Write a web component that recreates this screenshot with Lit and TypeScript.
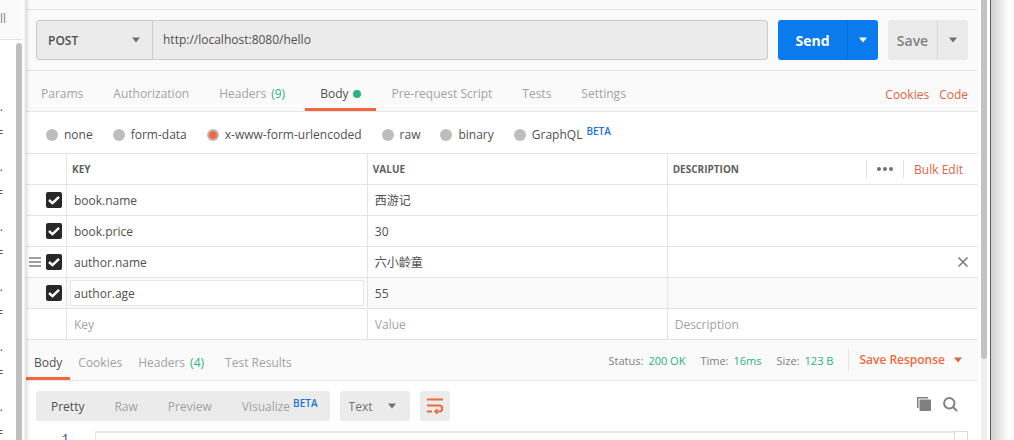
import { LitElement, html, css, nothing } from "lit";
import { customElement, property, state } from "lit/decorators.js";
import { classMap } from "lit/directives/class-map.js";

interface Row {
  key: string;
  value: string;
  hovered?: boolean;
  focused?: boolean;
}

const caret = () => html`<svg class="caret" width="8" height="6" viewBox="0 0 8 6" aria-hidden="true">
  <path d="M0 0.5H8L4 5.5Z" fill="currentColor" />
</svg>`;

const base = css`
  :host {
    font-family: "Open Sans", "Noto Sans CJK SC", sans-serif;
    font-size: 12px;
    line-height: 18px;
    color: #505050;
  }
  * {
    box-sizing: border-box;
  }
  button,
  input,
  select {
    font: inherit;
    color: inherit;
    border: 0;
    margin: 0;
    padding: 0;
    background: none;
    border-radius: 0;
    outline: 0;
    appearance: none;
  }
  a {
    color: #e0653d;
    text-decoration: none;
  }
  .caret {
    display: block;
    flex: none;
    color: #707070;
  }
  .green {
    color: #26b47f;
  }
  .beta {
    color: #1a73d6;
    font-size: 10px;
    font-weight: 600;
    line-height: 10px;
    align-self: flex-start;
  }
`;

@customElement("history-sidebar")
export class HistorySidebar extends LitElement {
  static styles = [
    base,
    css`
      :host {
        display: grid;
        grid-template-columns: 16px 6px 1fr;
        grid-template-rows: 40px minmax(0, 1fr);
        background: linear-gradient(90deg, #fff 23px, #e2e2e2);
        overflow: hidden;
      }
      .head {
        grid-column: 1 / 3;
        background: #fafafa;
        border-bottom: 1px solid #e4e4e4;
        padding-top: 10px;
        color: #808080;
        overflow: hidden;
      }
      .clip {
        display: flex;
        justify-content: flex-end;
        width: 6px;
        overflow: hidden;
        white-space: nowrap;
      }
      .list {
        grid-row: 2;
        grid-column: 1;
        padding-top: 60px;
        overflow: hidden;
      }
      .entry {
        display: flex;
        flex-direction: column;
        align-items: flex-end;
        gap: 12px;
        width: 3px;
        height: 60px;
        line-height: 14px;
        overflow: hidden;
      }
      .thumb {
        grid-row: 2;
        grid-column: 2;
        margin-top: 3px;
        border-radius: 3px 3px 0 0;
        background: #c0c0c0;
      }
    `,
  ];
  render() {
    return html`
      <div class="head"><div class="clip">ll</div></div>
      <div class="list">
        ${Array.from({ length: 6 }, () => html`<div class="entry"><span>.</span><span>=</span></div>`)}
      </div>
      <div class="thumb"></div>
    `;
  }
}

@customElement("request-bar")
export class RequestBar extends LitElement {
  static styles = [
    base,
    css`
      :host {
        display: flex;
        gap: 10px;
        padding: 10px;
        background: #fafafa;
        border-bottom: 1px solid #e6e6e6;
      }
      .address {
        flex: 1;
        display: flex;
        height: 40px;
        background: #ebebeb;
        border: 1px solid #cbcbcb;
        border-radius: 3px;
      }
      .method {
        display: grid;
        align-items: center;
        width: 116px;
        border-right: 1px solid #cbcbcb;
      }
      .method > * {
        grid-area: 1 / 1;
      }
      .method select {
        height: 38px;
        padding: 2px 11px 0;
        font-weight: 600;
      }
      .method .caret {
        justify-self: end;
        margin-right: 12px;
        pointer-events: none;
      }
      .url {
        flex: 1;
        min-width: 0;
        padding: 0 10px;
      }
      .split {
        display: flex;
        height: 40px;
        border-radius: 3px;
        overflow: hidden;
        background: #ebebeb;
        color: #808080;
        font-size: 14px;
        font-weight: 600;
      }
      .split button {
        display: grid;
        place-items: center;
      }
      .split .main {
        width: 49px;
        padding-top: 2px;
      }
      .split .more {
        width: 31px;
        border-left: 1px solid #d6d6d6;
      }
      .send {
        background: #097bed;
        color: #fff;
        font-weight: 700;
      }
      .send .main {
        width: 69px;
      }
      .send .more {
        border-color: #0a6cd0;
      }
      .send .caret {
        color: #fff;
      }
    `,
  ];
  render() {
    return html`
      <div class="address">
        <div class="method">
          <select aria-label="Method"><option>POST</option><option>GET</option></select>
          ${caret()}
        </div>
        <input class="url" aria-label="Request URL" .value=${"http://localhost:8080/hello"} />
      </div>
      <div class="split send">
        <button class="main">Send</button>
        <button class="more" aria-label="Send options">${caret()}</button>
      </div>
      <div class="split">
        <button class="main">Save</button>
        <button class="more" aria-label="Save options">${caret()}</button>
      </div>
    `;
  }
}

@customElement("tab-strip")
export class TabStrip extends LitElement {
  @property({ attribute: false }) tabs: { label: string; count?: number; dot?: boolean }[] = [];
  @property({ type: Boolean, reflect: true }) compact = false;
  @state() private active = "Body";

  static styles = [
    base,
    css`
      :host {
        display: flex;
        height: 41px;
        background: #fafafa;
        border-bottom: 1px solid #e6e6e6;
        color: #a2a2a2;
      }
      .tab {
        display: flex;
        align-items: center;
        gap: 5px;
        height: 40px;
        padding: 8px 15px 0;
        border-bottom: 3px solid transparent;
        white-space: nowrap;
      }
      :host([compact]) .tab {
        padding: 8px 8px 0;
      }
      .tab .green {
        margin-right: 5px;
      }
      .active {
        color: #505050;
        border-color: #f0683c;
      }
      .dot {
        width: 8px;
        height: 8px;
        border-radius: 50%;
        background: #26b47f;
      }
      .end {
        display: flex;
        align-items: center;
        margin-left: auto;
      }
    `,
  ];
  render() {
    return html`
      ${this.tabs.map(
        (t) => html`<button
          class=${classMap({ tab: true, active: t.label === this.active })}
          @click=${() => (this.active = t.label)}
        >
          ${t.label}
          ${t.count ? html`<span class="green">(${t.count})</span>` : nothing}
          ${t.dot ? html`<span class="dot"></span>` : nothing}
        </button>`
      )}
      <div class="end"><slot></slot></div>
    `;
  }
}

@customElement("body-modes")
export class BodyModes extends LitElement {
  static styles = [
    base,
    css`
      :host {
        display: flex;
        gap: 20px;
        height: 41px;
        padding: 4px 20px 0;
        align-items: center;
        background: #fff;
      }
      label {
        display: flex;
        align-items: center;
        gap: 6px;
      }
      .beta {
        margin-left: -2px;
      }
      input {
        width: 12px;
        height: 12px;
        border-radius: 50%;
        background: #bdbdbd;
      }
      input:checked {
        background: radial-gradient(circle, #f0683c 3px, #bdbdbd 5px);
      }
    `,
  ];
  render() {
    return ["none", "form-data", "x-www-form-urlencoded", "raw", "binary", "GraphQL"].map(
      (m) => html`<label
        ><input type="radio" name="mode" .checked=${m.startsWith("x-")} />${m}${m === "GraphQL"
          ? html`<span class="beta">BETA</span>`
          : nothing}</label
      >`
    );
  }
}

@customElement("params-table")
export class ParamsTable extends LitElement {
  private rows: Row[] = [
    { key: "book.name", value: "西游记" },
    { key: "book.price", value: "30" },
    { key: "author.name", value: "六小龄童", hovered: true },
    { key: "author.age", value: "55", focused: true },
  ];

  static styles = [
    base,
    css`
      :host {
        display: block;
        background: #fff;
      }
      table {
        width: 100%;
        table-layout: fixed;
        border-spacing: 0;
        border-top: 1px solid #e4e4e4;
      }
      .pick {
        width: 41px;
      }
      .key {
        width: 31.6%;
      }
      .value {
        width: 31.5%;
      }
      th,
      td {
        height: 31px;
        padding: 0;
        border-bottom: 1px solid #e4e4e4;
        border-right: 1px solid #e4e4e4;
        text-align: left;
      }
      th:last-child,
      td:last-child {
        border-right: 0;
      }
      th {
        padding-left: 5px;
        font-size: 10px;
        font-weight: 700;
        color: #606060;
      }
      .desc {
        display: flex;
        align-items: center;
        justify-content: space-between;
      }
      .tools {
        display: flex;
        align-items: center;
        height: 18px;
      }
      .dots {
        display: grid;
        place-items: center;
        width: 38px;
        height: 18px;
        border: solid #e0e0e0;
        border-width: 0 1px;
        color: #707070;
      }
      .bulk {
        padding: 2px 15px 0 10px;
        font-size: 12px;
        font-weight: 400;
      }
      .lead {
        display: flex;
        align-items: center;
        justify-content: flex-end;
        gap: 5px;
        padding-right: 4px;
        color: #808080;
      }
      .grip {
        display: grid;
      }
      .check {
        display: grid;
        width: 16px;
        height: 16px;
      }
      .check > * {
        grid-area: 1 / 1;
      }
      .check input {
        width: 16px;
        height: 16px;
        border-radius: 2px;
        background: #282828;
      }
      .check svg {
        pointer-events: none;
      }
      .field {
        display: block;
        width: 100%;
        height: 30px;
        padding: 0 7px;
      }
      .field::placeholder {
        color: #a2a2a2;
        opacity: 1;
      }
      .with-action {
        display: flex;
        align-items: center;
      }
      .remove {
        display: grid;
        margin-right: 10px;
      }
      .focused td {
        background: #fafafa;
      }
      .focused .edit {
        padding: 0 3px;
      }
      .focused .edit .field {
        height: 26px;
        padding: 0 3px;
        background: #fff;
        border: 1px solid #e6e6e6;
      }
    `,
  ];
  render() {
    return html`<table>
      <thead>
        <tr>
          <th class="pick"></th>
          <th class="key">KEY</th>
          <th class="value">VALUE</th>
          <th>
            <div class="desc">
              DESCRIPTION
              <div class="tools">
                <button class="dots" aria-label="Columns">
                  <svg width="16" height="4" viewBox="0 0 16 4" fill="currentColor">
                    <circle cx="2" cy="2" r="2" /><circle cx="8" cy="2" r="2" /><circle cx="14" cy="2" r="2" />
                  </svg>
                </button>
                <a class="bulk" href="#">Bulk Edit</a>
              </div>
            </div>
          </th>
        </tr>
      </thead>
      <tbody>
        ${this.rows.map(
          (r) => html`<tr class=${classMap({ focused: !!r.focused })}>
            <td>
              <div class="lead">
                ${r.hovered
                  ? html`<span class="grip"
                      ><svg width="12" height="10" viewBox="0 0 12 10">
                        <path d="M0 1H12M0 5H12M0 9H12" stroke="currentColor" stroke-width="1.5" /></svg
                    ></span>`
                  : nothing}
                <span class="check">
                  <input type="checkbox" checked aria-label="Enable ${r.key}" />
                  <svg width="16" height="16" viewBox="0 0 16 16">
                    <path d="M3 8L6.5 11.2L13 4.8" fill="none" stroke="#fff" stroke-width="2.4" />
                  </svg>
                </span>
              </div>
            </td>
            <td class="edit"><input class="field" aria-label="Key" .value=${r.key} /></td>
            <td><input class="field" aria-label="Value" .value=${r.value} /></td>
            <td>
              <div class="with-action">
                <input class="field" aria-label="Description" />
                ${r.hovered
                  ? html`<button class="remove" aria-label="Remove">
                      <svg width="10" height="10" viewBox="0 0 10 10">
                        <path d="M0.5 0.5L9.5 9.5M9.5 0.5L0.5 9.5" stroke="#777" stroke-width="1.5" />
                      </svg>
                    </button>`
                  : nothing}
              </div>
            </td>
          </tr>`
        )}
        <tr>
          <td></td>
          ${["Key", "Value", "Description"].map(
            (p) => html`<td><input class="field" aria-label="New ${p}" placeholder=${p} /></td>`
          )}
        </tr>
      </tbody>
    </table>`;
  }
}

@customElement("response-view")
export class ResponseView extends LitElement {
  static styles = [
    base,
    css`
      :host {
        display: flex;
        flex-direction: column;
        flex: 1;
        min-height: 0;
        background: #fff;
      }
      .stats {
        display: flex;
        align-items: center;
        gap: 15px;
        font-size: 11px;
        color: #808080;
        white-space: nowrap;
      }
      .stats > span {
        padding-top: 2px;
      }
      .stats .green {
        margin-left: 5px;
      }
      .save {
        display: flex;
        align-items: center;
        gap: 9px;
        height: 22px;
        padding: 0 16px 0 10px;
        border-left: 1px solid #e6e6e6;
        font-size: 12px;
        font-weight: 600;
        color: #f0683c;
      }
      .save .caret {
        color: #e0653d;
      }
      .toolbar {
        display: flex;
        align-items: center;
        gap: 10px;
        padding: 10px 20px 10px 10px;
      }
      .modes,
      .format,
      .wrap {
        height: 30px;
        border-radius: 3px;
        background: #ebebeb;
      }
      .modes {
        display: flex;
        color: #a2a2a2;
      }
      .modes button {
        display: flex;
        align-items: center;
        gap: 3px;
        padding: 2px 15px 0;
      }
      .modes button:last-child {
        padding-right: 12px;
      }
      .modes .on {
        color: #505050;
      }
      .modes .beta {
        margin-top: 5px;
      }
      .format {
        display: grid;
        align-items: center;
        width: 70px;
        color: #707070;
      }
      .format > * {
        grid-area: 1 / 1;
      }
      .format select {
        padding: 2px 9px 0;
        height: 30px;
      }
      .format .caret {
        justify-self: end;
        margin-right: 14px;
        pointer-events: none;
      }
      .wrap {
        display: grid;
        place-items: center;
        width: 30px;
      }
      .icons {
        display: flex;
        gap: 12px;
        margin-left: auto;
        padding-bottom: 4px;
        color: #808080;
      }
      .icons button {
        display: grid;
      }
      .editor {
        flex: 1;
        display: grid;
        grid-template-columns: 69px minmax(0, 1fr) 14px;
        padding-right: 10px;
        min-height: 0;
        overflow: hidden;
      }
      .line {
        padding: 0 26px 0 0;
        text-align: right;
        font: 12px/18px "Liberation Mono", monospace;
        color: #2b4a8c;
      }
      .code {
        border: solid #e6e6e6;
        border-width: 2px 0 0 1px;
      }
      .track {
        border: 1px solid #dcdcdc;
        border-bottom: 0;
      }
    `,
  ];
  render() {
    return html`
      <tab-strip compact .tabs=${[{ label: "Body" }, { label: "Cookies" }, { label: "Headers", count: 4 }, { label: "Test Results" }]}>
        <div class="stats">
          <span>Status:<span class="green">200 OK</span></span>
          <span>Time:<span class="green">16ms</span></span>
          <span>Size:<span class="green">123 B</span></span>
          <button class="save">Save Response ${caret()}</button>
        </div>
      </tab-strip>
      <div class="toolbar">
        <div class="modes">
          <button class="on">Pretty</button>
          <button>Raw</button>
          <button>Preview</button>
          <button>Visualize<span class="beta">BETA</span></button>
        </div>
        <div class="format">
          <select aria-label="Format"><option>Text</option><option>JSON</option></select>
          ${caret()}
        </div>
        <button class="wrap" aria-label="Wrap lines">
          <svg width="16" height="16" viewBox="0 0 16 16" fill="none" stroke="#f0683c" stroke-width="2">
            <path d="M0 1.5H16M0 7.5H12.5C16 7.5 16 13.5 12.5 13.5H8.5M0 13.5H5" />
            <path d="M10.5 11L8 13.5L10.5 16" stroke-width="1.6" />
          </svg>
        </button>
        <div class="icons">
          <button aria-label="Copy">
            <svg width="14" height="14" viewBox="0 0 14 14">
              <path d="M0 0H11V1.5H1.5V11H0Z" fill="currentColor" />
              <rect x="2.5" y="2.5" width="11.5" height="11.5" rx="1" fill="currentColor" />
            </svg>
          </button>
          <button aria-label="Search">
            <svg width="15" height="15" viewBox="0 0 15 15" fill="none" stroke="currentColor" stroke-width="2">
              <circle cx="6.3" cy="6.3" r="5.2" />
              <path d="M10 10L14 14" />
            </svg>
          </button>
        </div>
      </div>
      <div class="editor">
        <div class="line">1</div>
        <div class="code"></div>
        <div class="track"></div>
      </div>
    `;
  }
}

@customElement("app-root")
export class AppRoot extends LitElement {
  static styles = [
    base,
    css`
      :host {
        display: grid;
        grid-template-columns: 26px minmax(0, 1fr) 13px 23px;
        height: 100vh;
        overflow: hidden;
        background: #fff;
      }
      main {
        position: relative;
        display: flex;
        flex-direction: column;
        min-height: 0;
        overflow: hidden;
      }
      main::before {
        content: "";
        position: absolute;
        inset: 0 auto 0 0;
        width: 4px;
        background: linear-gradient(90deg, rgba(0, 0, 0, 0.1), transparent);
        pointer-events: none;
      }
      .top {
        flex: none;
        height: 10px;
        background: #fafafa;
        border-bottom: 1px solid #e6e6e6;
      }
      .links {
        display: flex;
        gap: 10px;
        padding: 8px 10px 0 0;
      }
      .scroll {
        padding: 0 3px;
        border-right: 1px solid #606060;
      }
      .rail {
        height: 100%;
        background: #eeeeee;
      }
      .thumb {
        height: 81.5%;
        border-radius: 0 0 3px 3px;
        background: #c2c2c2;
      }
      .edge {
        background: linear-gradient(90deg, #cfcfcf, #fff 18px);
      }
    `,
  ];
  render() {
    return html`
      <history-sidebar></history-sidebar>
      <main>
        <div class="top"></div>
        <request-bar></request-bar>
        <tab-strip
          .tabs=${[
            { label: "Params" },
            { label: "Authorization" },
            { label: "Headers", count: 9 },
            { label: "Body", dot: true },
            { label: "Pre-request Script" },
            { label: "Tests" },
            { label: "Settings" },
          ]}
        >
          <div class="links"><a href="#">Cookies</a><a href="#">Code</a></div>
        </tab-strip>
        <body-modes></body-modes>
        <params-table></params-table>
        <response-view></response-view>
      </main>
      <div class="scroll"><div class="rail"><div class="thumb"></div></div></div>
      <div class="edge"></div>
    `;
  }
}
